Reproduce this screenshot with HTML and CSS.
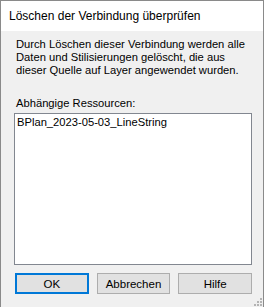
FILE: index.html
```html
<!DOCTYPE html>
<html lang="de">
<head>
    <meta charset="UTF-8">
    <title>Löschen der Verbindung überprüfen</title>
    <link rel="stylesheet" href="styles.css">
</head>
<body>
    <div class="window">
        <div class="titlebar">Löschen der Verbindung überprüfen</div>
        <div class="content">
            <p class="message">Durch Löschen dieser Verbindung werden alle<br>Daten und Stilisierungen gelöscht, die aus<br>dieser Quelle auf Layer angewendet wurden.</p>
            <label class="list-label" for="resources">Abhängige Ressourcen:</label>
            <div class="listbox" id="resources">
                <div class="list-item">BPlan_2023-05-03_LineString</div>
            </div>
            <div class="buttons">
                <button class="btn btn-default">OK</button>
                <button class="btn">Abbrechen</button>
                <button class="btn">Hilfe</button>
            </div>
            <div class="grip">
                <svg width="8" height="8" viewBox="0 0 8 8">
                    <rect x="6" y="0" width="2" height="2" fill="#b4b4b4"/>
                    <rect x="3" y="3" width="2" height="2" fill="#b4b4b4"/>
                    <rect x="6" y="3" width="2" height="2" fill="#b4b4b4"/>
                    <rect x="0" y="6" width="2" height="2" fill="#b4b4b4"/>
                    <rect x="3" y="6" width="2" height="2" fill="#b4b4b4"/>
                    <rect x="6" y="6" width="2" height="2" fill="#b4b4b4"/>
                </svg>
            </div>
        </div>
    </div>
</body>
</html>
```

FILE: styles.css
```css
html, body {
    margin: 0;
    padding: 0;
    background: #f0f0f0;
}
body {
    font-family: "Liberation Sans", Arial, sans-serif;
    font-size: 11.2px;
    color: #000;
}
.window {
    width: 264px;
    height: 307px;
    box-sizing: border-box;
    border: 1px solid #8a8a8a;
    border-bottom: none;
    display: flex;
    flex-direction: column;
}
.titlebar {
    height: 30px;
    line-height: 30px;
    background: #fff;
    padding-left: 8px;
    font-size: 12px;
    white-space: nowrap;
}
.content {
    flex: 1;
    background: #f0f0f0;
    padding: 7px 11px 0 13px;
    position: relative;
}
.message {
    margin: 0 0 0 2px;
    line-height: 13px;
    white-space: nowrap;
}
.list-label {
    display: block;
    margin: 20px 0 0 2px;
    line-height: 13px;
}
.listbox {
    margin-top: 3px;
    height: 152px;
    box-sizing: border-box;
    border: 1px solid #828790;
    background: #fff;
    padding: 2px 2px;
}
.list-item {
    line-height: 13px;
}
.buttons {
    display: flex;
    gap: 8px;
    margin-top: 8px;
    padding-left: 1px;
}
.btn {
    width: 74px;
    height: 21px;
    box-sizing: border-box;
    background: #e1e1e1;
    border: 1px solid #adadad;
    font-family: inherit;
    font-size: 11.5px;
    color: #000;
    padding: 0;
}
.btn-default {
    border: 2px solid #0078d7;
}
.grip {
    position: absolute;
    right: 1px;
    bottom: 1px;
    line-height: 0;
}
```
